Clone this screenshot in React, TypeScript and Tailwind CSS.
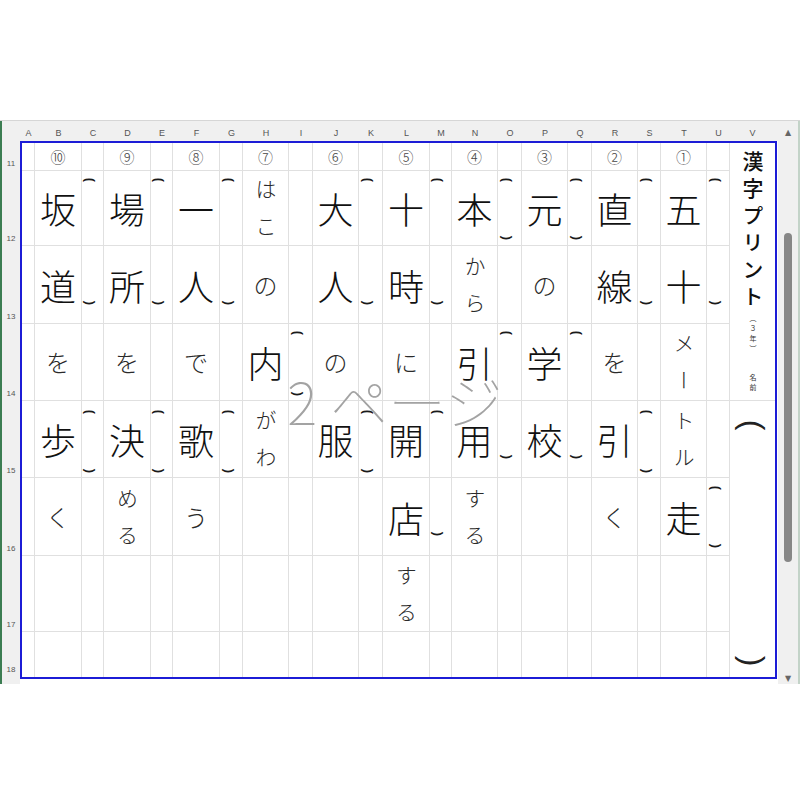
import type { ReactNode } from 'react';

const COLS = ['A', 'B', 'C', 'D', 'E', 'F', 'G', 'H', 'I', 'J', 'K', 'L', 'M', 'N', 'O', 'P', 'Q', 'R', 'S', 'T', 'U', 'V'];
const ROWS = [11, 12, 13, 14, 15, 16, 17, 18];

const GRID_COLS =
  'grid-cols-[13px_47px_22px_47px_22px_47px_23px_46px_24px_46px_24px_47px_22px_46px_24px_46px_24px_46px_23px_46px_23px_45px]';
const GRID_ROWS = 'grid-rows-[28px_75px_78px_77px_77px_78px_76px_45px]';

function Num({ n }: { n: string }) {
  return <span className="text-[15px] font-light leading-none text-[#444]">{n}</span>;
}

function Kanji({ ch }: { ch: string }) {
  return <span className="text-[36px] font-light leading-none text-[#111]">{ch}</span>;
}

function Kana({ ch }: { ch: string }) {
  return <span className="text-[24px] font-light leading-none text-[#2a2a2a]">{ch}</span>;
}

// two small kana stacked, read top to bottom
function Pair({ text }: { text: string }) {
  return (
    <div className="flex flex-col items-center gap-[16px] text-[21px] font-light leading-[21px] text-[#2a2a2a]">
      {text.split('').map((c, i) => (
        <span key={i} className="[writing-mode:vertical-rl]">
          {c}
        </span>
      ))}
    </div>
  );
}

function Paren({ ch, className = '' }: { ch: '(' | ')'; className?: string }) {
  return (
    <span
      className={`flex h-[12px] w-[12px] rotate-90 items-center justify-center font-['Liberation_Sans',sans-serif] text-[13px] font-bold leading-none text-[#1a1a1a] ${className}`}
    >
      {ch}
    </span>
  );
}

function Bracket({ open, close }: { open?: string; close?: string }) {
  return (
    <div className="flex flex-col items-center self-stretch pr-[3px]">
      {open !== undefined && <Paren ch="(" className={open} />}
      {close !== undefined && <Paren ch=")" className={`mt-auto ${close}`} />}
    </div>
  );
}

const CELLS: Record<string, ReactNode> = {
  B11: <Num n="⑩" />,
  D11: <Num n="⑨" />,
  F11: <Num n="⑧" />,
  H11: <Num n="⑦" />,
  J11: <Num n="⑥" />,
  L11: <Num n="⑤" />,
  N11: <Num n="④" />,
  P11: <Num n="③" />,
  R11: <Num n="②" />,
  T11: <Num n="①" />,

  // ⑩
  B12: <Kanji ch="坂" />,
  B13: <Kanji ch="道" />,
  B14: <Kana ch="を" />,
  B15: <Kanji ch="歩" />,
  B16: <Kana ch="く" />,
  C12: <Bracket open="mt-[3px]" />,
  C13: <Bracket close="mb-[14px]" />,
  C15: <Bracket open="mt-[5px]" close="mb-0" />,

  // ⑨
  D12: <Kanji ch="場" />,
  D13: <Kanji ch="所" />,
  D14: <Kana ch="を" />,
  D15: <Kanji ch="決" />,
  D16: <Pair text="める" />,
  E12: <Bracket open="mt-[3px]" />,
  E13: <Bracket close="mb-[14px]" />,
  E15: <Bracket open="mt-[5px]" close="mb-0" />,

  // ⑧
  F12: <Kanji ch="一" />,
  F13: <Kanji ch="人" />,
  F14: <Kana ch="で" />,
  F15: <Kanji ch="歌" />,
  F16: <Kana ch="う" />,
  G12: <Bracket open="mt-[3px]" />,
  G13: <Bracket close="mb-[14px]" />,
  G15: <Bracket open="mt-[5px]" close="mb-0" />,

  // ⑦
  H12: <Pair text="はこ" />,
  H13: <Kana ch="の" />,
  H14: <Kanji ch="内" />,
  H15: <Pair text="がわ" />,
  I14: <Bracket open="mt-[3px]" close="mb-0" />,

  // ⑥
  J12: <Kanji ch="大" />,
  J13: <Kanji ch="人" />,
  J14: <Kana ch="の" />,
  J15: <Kanji ch="服" />,
  K12: <Bracket open="mt-[3px]" />,
  K13: <Bracket close="mb-[14px]" />,
  K15: <Bracket open="mt-[5px]" close="mb-0" />,

  // ⑤
  L12: <Kanji ch="十" />,
  L13: <Kanji ch="時" />,
  L14: <Kana ch="に" />,
  L15: <Kanji ch="開" />,
  L16: <Kanji ch="店" />,
  L17: <Pair text="する" />,
  M12: <Bracket open="mt-[3px]" />,
  M13: <Bracket close="mb-[14px]" />,
  M15: <Bracket open="mt-[5px]" />,
  M16: <Bracket close="mb-[15px]" />,

  // ④
  N12: <Kanji ch="本" />,
  N13: <Pair text="から" />,
  N14: <Kanji ch="引" />,
  N15: <Kanji ch="用" />,
  N16: <Pair text="する" />,
  O12: <Bracket open="mt-[3px]" close="mb-[1px]" />,
  O14: <Bracket open="mt-[3px]" />,
  O15: <Bracket close="mb-[14px]" />,

  // ③
  P12: <Kanji ch="元" />,
  P13: <Kana ch="の" />,
  P14: <Kanji ch="学" />,
  P15: <Kanji ch="校" />,
  Q12: <Bracket open="mt-[3px]" close="mb-[1px]" />,
  Q14: <Bracket open="mt-[3px]" />,
  Q15: <Bracket close="mb-[14px]" />,

  // ②
  R12: <Kanji ch="直" />,
  R13: <Kanji ch="線" />,
  R14: <Kana ch="を" />,
  R15: <Kanji ch="引" />,
  R16: <Kana ch="く" />,
  S12: <Bracket open="mt-[3px]" />,
  S13: <Bracket close="mb-[14px]" />,
  S15: <Bracket open="mt-[5px]" close="mb-0" />,

  // ①
  T12: <Kanji ch="五" />,
  T13: <Kanji ch="十" />,
  T14: <Pair text="メー" />,
  T15: <Pair text="トル" />,
  T16: <Kanji ch="走" />,
  U12: <Bracket open="mt-[3px]" />,
  U13: <Bracket close="mb-[14px]" />,
  U16: <Bracket open="mt-[4px]" close="mb-[3px]" />,
};

function Page() {
  return (
    <div className={`relative grid h-[538px] w-[757px] border-2 border-[#1c1cd6] bg-white ${GRID_COLS} ${GRID_ROWS}`}>
      {/* title + name box, merged cells in column V */}
      <div className="col-start-22 row-span-4 row-start-1 flex flex-col items-center border-b border-[#e0e0e0] pt-[8px]">
        <span className="text-[21px] font-medium leading-none tracking-[6px] text-[#111] [writing-mode:vertical-rl]">
          漢字プリント
        </span>
        <span className="mt-[2px] text-[7px] leading-none tracking-[3px] text-[#333] [writing-mode:vertical-rl]">
          （３年）
        </span>
        <span className="mt-[19px] text-[7px] leading-none tracking-[3px] text-[#333] [writing-mode:vertical-rl]">
          名前
        </span>
      </div>
      <div className="col-start-22 row-span-4 row-start-5 flex flex-col items-center">
        <span className="mt-[8px] flex h-[32px] w-[32px] rotate-90 items-center justify-center font-['Liberation_Sans',sans-serif] text-[32px] leading-none text-[#222]">
          (
        </span>
        <span className="mt-auto flex h-[32px] w-[32px] rotate-90 items-center justify-center font-['Liberation_Sans',sans-serif] text-[32px] leading-none text-[#222]">
          )
        </span>
      </div>

      {ROWS.map((r, ri) =>
        COLS.slice(0, 21).map((c) => (
          <div
            key={c + r}
            className={`flex items-center justify-center border-r border-[#e0e0e0] ${ri < 7 ? 'border-b' : ''}`}
          >
            {CELLS[c + r]}
          </div>
        )),
      )}

      {/* page-break preview label */}
      <span className="pointer-events-none absolute left-[265px] top-[228px] whitespace-nowrap text-[58px] font-thin leading-none text-[#a3a3a3]">
        2 ページ
      </span>
    </div>
  );
}

function RowHeader() {
  return (
    <div className="flex w-[18px] flex-col bg-[#f0f0f0] pt-[2px]">
      <div className={`grid ${GRID_ROWS}`}>
        {ROWS.map((r) => (
          <div
            key={r}
            className="flex items-end justify-center pb-[3px] font-['Liberation_Sans',sans-serif] text-[8px] leading-none text-[#555]"
          >
            {r}
          </div>
        ))}
      </div>
    </div>
  );
}

function Scrollbar() {
  return (
    <div className="flex w-[22px] flex-col items-center border-r-2 border-[#c3d3c8] bg-[#f0f0f0]">
      <span className="mt-[7px] font-['DejaVu_Sans',sans-serif] text-[8px] leading-[10px] text-[#666]">▲</span>
      <div className="mt-[95px] h-[329px] w-[8px] rounded-full bg-[#878787]" />
      <span className="mt-[112px] font-['DejaVu_Sans',sans-serif] text-[8px] leading-[10px] text-[#666]">▼</span>
    </div>
  );
}

export default function App() {
  return (
    <div className="h-[800px] w-[800px] overflow-hidden bg-white font-['Noto_Sans_CJK_JP',sans-serif]">
      <div className="h-[120px]" />
      <div className="flex h-[564px] border-t border-[#d6d6d6]">
        <div className="w-[2px] bg-[#3c7d52]" />
        <div className="flex w-[776px] flex-col">
          <div className="flex h-[20px] bg-[#f0f0f0]">
            <div className="w-[20px]" />
            <div className={`grid w-[753px] items-end pb-[3px] ${GRID_COLS}`}>
              {COLS.map((c) => (
                <span
                  key={c}
                  className="text-center font-['Liberation_Sans',sans-serif] text-[9px] leading-none text-[#555]"
                >
                  {c}
                </span>
              ))}
            </div>
            <div className="flex-1" />
          </div>
          <div className="flex flex-1">
            <RowHeader />
            <Page />
          </div>
        </div>
        <Scrollbar />
      </div>
    </div>
  );
}
